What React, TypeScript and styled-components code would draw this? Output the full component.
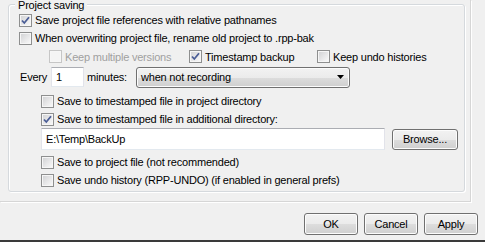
import React from "react";
import styled, { createGlobalStyle } from "styled-components";

const GlobalStyle = createGlobalStyle`
  html, body {
    margin: 0;
    padding: 0;
    background: #f0f0f0;
    overflow: hidden;
  }
  body {
    font-family: "Liberation Sans", Arial, sans-serif;
    font-size: 11px;
    letter-spacing: -0.2px;
    color: #000;
  }
`;

const Window = styled.div`
  width: 485px;
  height: 242px;
  display: flex;
  flex-direction: column;
  background: #f0f0f0;
  overflow: hidden;
`;

const TabPage = styled.div`
  width: 471px;
  height: 202px;
  box-sizing: border-box;
  padding: 4px 0 0 8px;
  border-right: 1px solid #d6d6d6;
  border-bottom: 1px solid #d6d6d6;
  box-shadow: 1px 1px 0 #ffffff;
`;

const GroupBox = styled.div`
  position: relative;
  width: 457px;
  box-sizing: border-box;
  border: 1px solid #d5d9dd;
  border-radius: 3px;
  padding: 6px 0 2px 0;
  box-shadow: inset 1px 1px 0 #ffffff, 1px 1px 0 #ffffff;
`;

const Legend = styled.span`
  position: absolute;
  top: -6px;
  left: 6px;
  padding: 0 3px;
  line-height: 12px;
  background: #f0f0f0;
`;

const Row = styled.div<{ $indent: number; $h?: number; $mt?: number }>`
  display: flex;
  align-items: center;
  height: ${(p) => p.$h ?? 18}px;
  margin-top: ${(p) => p.$mt ?? 0}px;
  padding-left: ${(p) => p.$indent}px;
  white-space: nowrap;
`;

const OptionGrid = styled.div`
  display: grid;
  grid-template-columns: 140px 128px auto;
  align-items: center;
  height: 19px;
  padding-left: 40px;
  white-space: nowrap;
`;

const Check = styled.label<{ $disabled?: boolean }>`
  display: flex;
  align-items: center;
  gap: 3px;
  color: ${(p) => (p.$disabled ? "#a0a0a0" : "#000")};
`;

const Box = styled.span<{ $disabled?: boolean }>`
  width: 13px;
  height: 13px;
  box-sizing: border-box;
  flex: none;
  border: 1px solid ${(p) => (p.$disabled ? "#c6c6c6" : "#8e8f8f")};
  background: ${(p) =>
    p.$disabled
      ? "#f4f4f4"
      : "linear-gradient(135deg, #cfd0d2 0%, #e8e8e9 55%, #fbfbfb 100%)"};
  box-shadow: inset 0 0 0 1px #f6f6f6;
  display: flex;
  align-items: center;
  justify-content: center;
`;

const Label = styled.span<{ $w: number }>`
  width: ${(p) => p.$w}px;
  flex: none;
`;

const TextInput = styled.div<{ $w: number; $h: number }>`
  width: ${(p) => p.$w}px;
  height: ${(p) => p.$h}px;
  box-sizing: border-box;
  flex: none;
  display: flex;
  align-items: center;
  padding-left: 4px;
  background: #fff;
  border: 1px solid #e2e3ea;
  border-top-color: #abadb3;
  border-bottom-color: #e3e9ef;
`;

const Combo = styled.div`
  width: 214px;
  height: 21px;
  box-sizing: border-box;
  flex: none;
  display: flex;
  align-items: center;
  justify-content: space-between;
  padding: 0 5px 0 4px;
  border: 1px solid #707070;
  border-radius: 3px;
  background: linear-gradient(#f2f2f2 0%, #ebebeb 50%, #dddddd 51%, #cfcfcf 100%);
  box-shadow: inset 0 0 0 1px #fcfcfc;
`;

const Button = styled.div<{ $w: number; $h: number }>`
  width: ${(p) => p.$w}px;
  height: ${(p) => p.$h}px;
  box-sizing: border-box;
  flex: none;
  display: flex;
  align-items: center;
  justify-content: center;
  border: 1px solid #707070;
  border-radius: 3px;
  background: linear-gradient(#f2f2f2 0%, #ebebeb 50%, #dddddd 51%, #cfcfcf 100%);
  box-shadow: inset 0 0 0 1px #fcfcfc;
`;

const ButtonBar = styled.div`
  display: flex;
  justify-content: flex-end;
  gap: 6px;
  margin-top: 11px;
  padding-right: 7px;
`;

const Spacer = styled.div`
  flex: 1;
`;

const BottomEdge = styled.div`
  height: 2px;
  background: #3a3a3a;
`;

const Tick = () => (
  <svg width="11" height="11" viewBox="0 0 11 11">
    <polyline
      points="2,5.5 4.3,8 9,2.3"
      fill="none"
      stroke="#4a5d96"
      strokeWidth="1.8"
      strokeLinejoin="miter"
    />
  </svg>
);

const CheckBox = ({
  checked,
  disabled,
  children,
}: {
  checked?: boolean;
  disabled?: boolean;
  children: React.ReactNode;
}) => (
  <Check $disabled={disabled}>
    <Box $disabled={disabled}>{checked && <Tick />}</Box>
    <span>{children}</span>
  </Check>
);

const App = () => {
  return (
    <Window>
      <GlobalStyle />
      <TabPage>
        <GroupBox>
          <Legend>Project saving</Legend>
          <Row $indent={10}>
            <CheckBox checked>Save project file references with relative pathnames</CheckBox>
          </Row>
          <Row $indent={10}>
            <CheckBox>When overwriting project file, rename old project to .rpp-bak</CheckBox>
          </Row>
          <OptionGrid>
            <CheckBox disabled>Keep multiple versions</CheckBox>
            <CheckBox checked>Timestamp backup</CheckBox>
            <CheckBox>Keep undo histories</CheckBox>
          </OptionGrid>
          <Row $indent={11} $h={22}>
            <Label $w={31}>Every</Label>
            <TextInput $w={33} $h={20}>1</TextInput>
            <Label $w={49} style={{ paddingLeft: 3 }}>minutes:</Label>
            <Combo>
              <span>when not recording</span>
              <svg width="7" height="4" viewBox="0 0 7 4">
                <polygon points="0,0 7,0 3.5,4" fill="#000" />
              </svg>
            </Combo>
          </Row>
          <Row $indent={32} $mt={4}>
            <CheckBox>Save to timestamped file in project directory</CheckBox>
          </Row>
          <Row $indent={32}>
            <CheckBox checked>Save to timestamped file in additional directory:</CheckBox>
          </Row>
          <Row $indent={32} $h={22} style={{ gap: 7 }}>
            <TextInput $w={344} $h={22}>E:\Temp\BackUp</TextInput>
            <Button $w={66} $h={21}>Browse...</Button>
          </Row>
          <Row $indent={32} $mt={3}>
            <CheckBox>Save to project file (not recommended)</CheckBox>
          </Row>
          <Row $indent={32}>
            <CheckBox>Save undo history (RPP-UNDO) (if enabled in general prefs)</CheckBox>
          </Row>
        </GroupBox>
      </TabPage>
      <ButtonBar>
        <Button $w={54} $h={22}>OK</Button>
        <Button $w={54} $h={22}>Cancel</Button>
        <Button $w={54} $h={22}>Apply</Button>
      </ButtonBar>
      <Spacer />
      <BottomEdge />
    </Window>
  );
};

export default App;
